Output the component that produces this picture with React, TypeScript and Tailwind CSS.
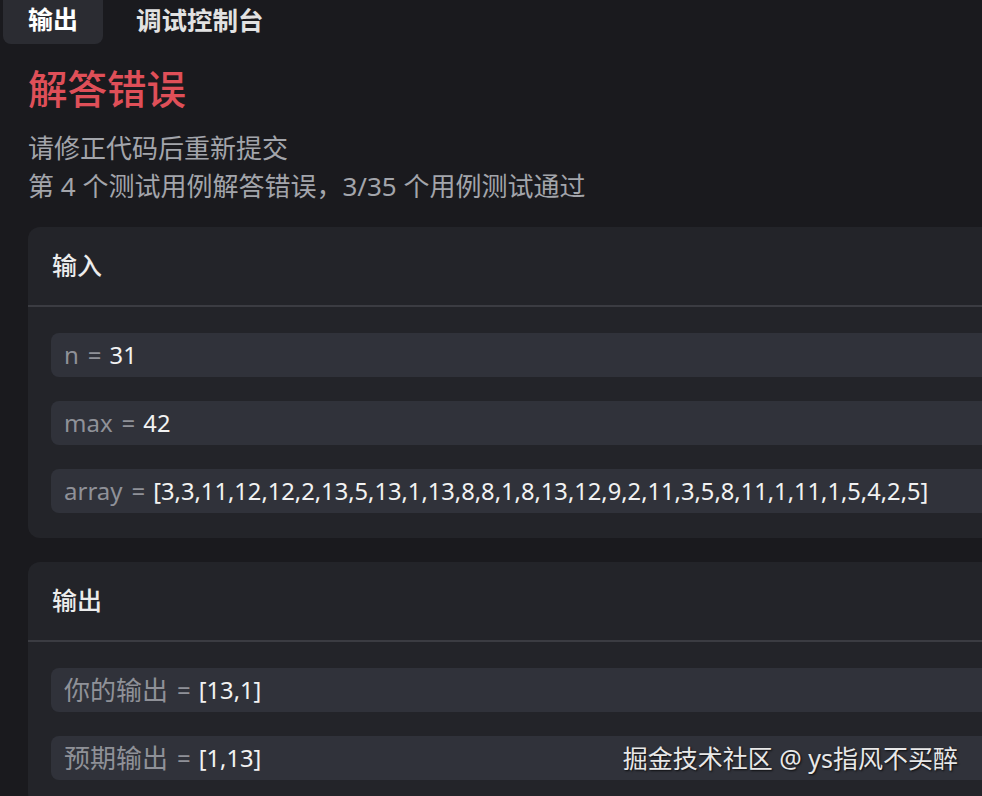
import React from "react";

const font = {
  fontFamily: '"Noto Sans", "Noto Sans CJK SC", sans-serif',
};

function Row({ k, v, cjk }: { k: string; v: string; cjk?: boolean }) {
  return (
    <div className="h-[44px] rounded-lg bg-[#30323a] pl-[13px] flex items-center text-[24px] leading-[44px] whitespace-nowrap">
      <span className={cjk ? "text-[#8f9198] text-[26px]" : "text-[#8f9198]"}>{k}</span>
      <span className="text-[#8f9198] ml-[9px]">=</span>
      <span className="text-[#f2f2f2] ml-[8px] text-[23.7px]">{v}</span>
    </div>
  );
}

function Card({
  title,
  rows,
}: {
  title: string;
  rows: { k: string; v: string; cjk?: boolean }[];
}) {
  return (
    <div className="w-[1000px] rounded-xl bg-[#232429]">
      <div className="h-[80px] flex items-center px-[24px] border-b-2 border-[#3b3c42] text-[25px] font-medium text-[#ececec]">
        {title}
      </div>
      <div className="px-[23px] pt-[26px] pb-[25px] flex flex-col gap-[24px]">
        {rows.map((r, i) => (
          <Row key={i} k={r.k} v={r.v} cjk={r.cjk} />
        ))}
      </div>
    </div>
  );
}

export default function App() {
  return (
    <div className="relative w-full h-[796px] overflow-hidden bg-[#1a1a1e]" style={font}>
      <div className="flex items-stretch h-[44px] pl-[3px]">
        <div className="w-[100px] rounded-b-lg bg-[#2b2c32] flex items-center justify-center pb-[4px] text-[25px] font-bold text-white">
          输出
        </div>
        <div className="ml-[33px] flex items-center pb-[4px] text-[25.5px] font-bold text-[#e2e2e2]">
          调试控制台
        </div>
      </div>
      <div className="pl-[28px]">
        <div className="mt-[21px] text-[39.5px] leading-[48px] font-medium text-[#df4f58]">解答错误</div>
        <div className="mt-[16px] text-[26px] leading-[38px] text-[#a3a5ab]">请修正代码后重新提交</div>
        <div className="text-[26px] leading-[38px] text-[#a3a5ab]">
          第 4 个测试用例解答错误，3/35 个用例测试通过
        </div>
        <div className="mt-[22px] flex flex-col gap-[24px]">
          <Card
            title="输入"
            rows={[
              { k: "n", v: "31" },
              { k: "max", v: "42" },
              {
                k: "array",
                v: "[3,3,11,12,12,2,13,5,13,1,13,8,8,1,8,13,12,9,2,11,3,5,8,11,1,11,1,5,4,2,5]",
              },
            ]}
          />
          <Card
            title="输出"
            rows={[
              { k: "你的输出", v: "[13,1]", cjk: true },
              { k: "预期输出", v: "[1,13]", cjk: true },
            ]}
          />
        </div>
      </div>
      <div
        className="absolute top-[739px] right-[24px] text-[25px] leading-[38px] text-[#e8e8e8] whitespace-nowrap"
        style={{ textShadow: "1px 1px 2px rgba(0,0,0,0.8)" }}
      >
        掘金技术社区 @ ys指风不买醉
      </div>
    </div>
  );
}
